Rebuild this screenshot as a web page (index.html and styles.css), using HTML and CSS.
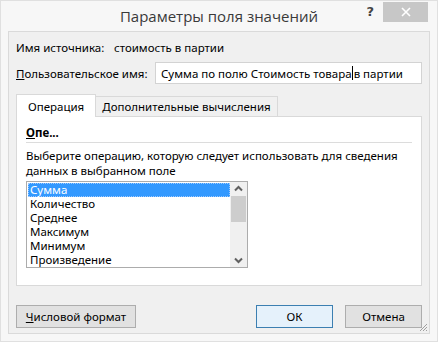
FILE: index.html
```html
<!DOCTYPE html>
<html lang="ru">
<head>
<meta charset="utf-8">
<link rel="stylesheet" href="styles.css">
</head>
<body>
<div class="window">
  <div class="titlebar">
    <div class="tb-side"></div>
    <div class="title">Параметры поля значений</div>
    <div class="tb-side tb-right">
      <span class="help">?</span>
      <span class="close">
        <svg width="10" height="10" viewBox="0 0 10 10"><path d="M1 1 L9 9 M9 1 L1 9" stroke="#fff" stroke-width="1.6"/></svg>
      </span>
    </div>
  </div>
  <div class="client">
    <div class="row source"><span class="lbl">Имя источника:</span><span>стоимость в партии</span></div>
    <div class="row custom">
      <span class="lbl2"><u>П</u>ользовательское имя:</span>
      <div class="input">Сумма по полю Стоимость товара<span class="caret"></span>в партии</div>
    </div>
    <div class="tabs">
      <div class="tab active">Операция</div>
      <div class="tab">Дополнительные вычисления</div>
    </div>
    <div class="panel">
      <div class="group"><u>О</u>пе...</div>
      <div class="desc">Выберите операцию, которую следует использовать для сведения данных в выбранном поле</div>
      <div class="listbox">
        <ul class="items">
          <li class="sel">Сумма</li>
          <li>Количество</li>
          <li>Среднее</li>
          <li>Максимум</li>
          <li>Минимум</li>
          <li>Произведение</li>
        </ul>
        <div class="scroll">
          <svg class="arrow" width="17" height="14" viewBox="0 0 17 14"><path d="M5 8.5 L8.5 5 L12 8.5" fill="none" stroke="#606060" stroke-width="2"/></svg>
          <div class="track"><div class="thumb"></div></div>
          <svg class="arrow" width="17" height="14" viewBox="0 0 17 14"><path d="M5 5.5 L8.5 9 L12 5.5" fill="none" stroke="#606060" stroke-width="2"/></svg>
        </div>
      </div>
    </div>
    <div class="buttons">
      <div class="btn numfmt"><u>Ч</u>исловой формат</div>
      <div class="spacer"></div>
      <div class="btn ok">ОК</div>
      <div class="btn cancel">Отмена</div>
    </div>
    <svg class="grip" width="9" height="9" viewBox="0 0 9 9"><path d="M8 1 L1 8 M8 4 L4 8 M8 7 L7 8" stroke="#a0a0a0" stroke-width="1"/></svg>
  </div>
</div>
</body>
</html>
```
FILE: styles.css
```css
* { box-sizing: border-box; }
html, body { margin: 0; padding: 0; }
body {
  width: 438px; height: 342px; overflow: hidden;
  font-family: "Noto Sans", "Open Sans", sans-serif;
  font-size: 11.5px; color: #000;
  background: #f7f7f7;
}
.window {
  width: 438px; height: 342px;
  display: flex; flex-direction: column;
  background: #f7f7f7;
  border: 1px solid #e0e0e0;
}
.titlebar {
  height: 30px;
  display: grid; grid-template-columns: 1fr auto 1fr;
  align-items: start;
}
.title {
  font-size: 15px; color: #3a3a3a; padding-top: 5px;
  font-family: "Open Sans", "Noto Sans", sans-serif;
}
.tb-right { display: flex; justify-content: flex-end; align-items: flex-start; gap: 9px; padding-right: 9px; }
.help { font-weight: bold; font-size: 13px; color: #444; padding-top: 3px; font-family: "DejaVu Sans", sans-serif; }
.close {
  width: 45px; height: 20px; margin-top: 1px;
  background: #c7c7c7;
  display: flex; align-items: center; justify-content: center;
}
.client {
  flex: 1;
  margin: 0 7px 7px 7px;
  background: #f0f0f0;
  border: 1px solid #dadada;
  padding: 6px 7px 0 7px;
  display: flex; flex-direction: column;
  position: relative;
}
.row { display: flex; align-items: center; }
.source { height: 18px; }
.source .lbl { width: 98px; }
.custom { margin-top: 5px; height: 24px; }
.lbl2 { width: 139px; }
.input {
  flex: 1; height: 22px; background: #fff;
  border: 1px solid #d3d3d3; padding: 0 0 0 5px;
  display: flex; align-items: center; white-space: nowrap;
}
.caret { display: inline-block; width: 1px; height: 14px; background: #000; margin: 0 1px 0 0; }
.tabs { display: flex; margin-top: 9px; height: 22px; align-items: flex-end; }
.tab {
  height: 20px; padding: 0 6px;
  border: 1px solid #d9d9d9; border-bottom: none;
  background: #f0f0f0; display: flex; align-items: center;
  margin-left: -1px;
}
.tab.active {
  background: #fff; margin-left: 0; padding: 0 11px 0 11px;
  position: relative; z-index: 1; margin-bottom: -1px; height: 23px;
}
.panel {
  height: 170px; background: #fff; border: 1px solid #d9d9d9;
  padding: 6px 9px 0 9px;
}
.group {
  font-weight: bold; height: 20px; border-bottom: 1px solid #dcdcdc;
  display: flex; align-items: center;
}
.desc { margin-top: 5px; line-height: 15px; width: 390px; }
.listbox {
  margin-top: 3px; width: 222px; height: 87px;
  border: 1px solid #acacac; display: flex; background: #fff;
}
.items { list-style: none; margin: 0; padding: 1px 0 0 1px; flex: 1; }
.items li { height: 14px; line-height: 14px; padding-left: 2px; }
.items li.sel { background: #3399ff; color: #fff; outline: 1px dotted #9cc9ff; outline-offset: -1px; }
.scroll { width: 17px; display: flex; flex-direction: column; background: #f0f0f0; }
.arrow { display: block; }
.track { flex: 1; }
.thumb { height: 26px; margin: 0 1px; background: #cdcdcd; }
.buttons { display: flex; margin-top: 19px; }
.spacer { flex: 1; }
.btn {
  height: 23px; background: #e1e1e1; border: 1px solid #adadad;
  display: flex; align-items: center; justify-content: center;
}
.numfmt { width: 120px; }
.ok { width: 77px; border-color: #3c7fb1; background: #e5f1fb; }
.cancel { width: 77px; margin-left: 12px; }
.grip { position: absolute; right: 1px; bottom: 1px; }
```
